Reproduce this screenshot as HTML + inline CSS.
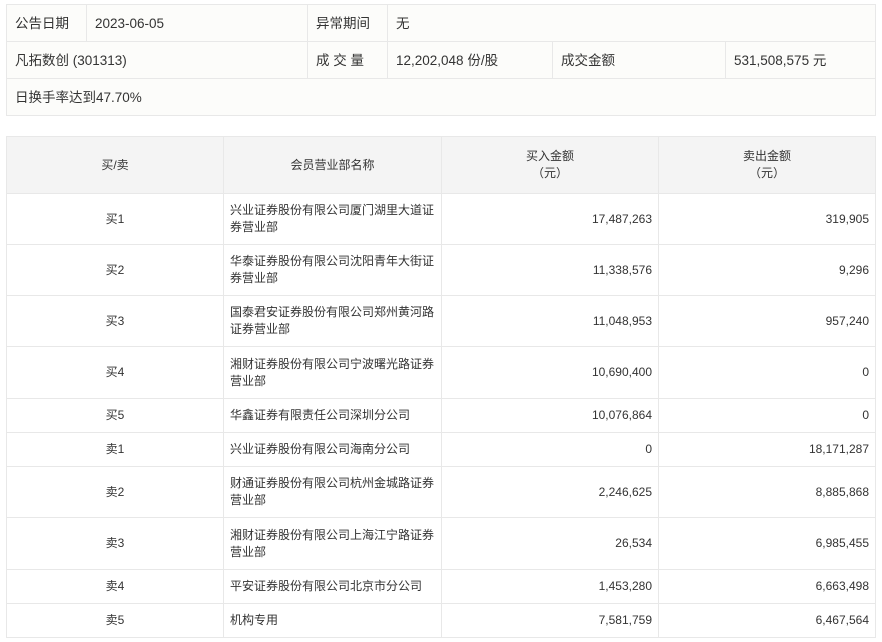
<!DOCTYPE html>
<html><head><meta charset="utf-8"><style>
body{margin:0;width:882px;height:642px;background:#fff;font-family:"Liberation Sans","Noto Sans CJK SC",sans-serif;font-size:12px;color:#333;position:relative;overflow:hidden}
table{border-collapse:collapse;position:absolute;left:6px;table-layout:fixed}
td{border:1px solid #e8e8e8;padding:0;line-height:17px}
#t1{top:4px;width:869px;background:#fcfcfa;font-size:13.5px}
#t1 td{height:36px;padding-left:8px}
#t2{top:136px;width:869px}
#t2 th{background:#f4f4f4;border:1px solid #e8e8e8;font-weight:normal;height:56px;line-height:17px;padding:0}
#t2 td.c{text-align:center}
#t2 td.r{text-align:right;padding-right:6px}
#t2 td.n{padding-left:6px}
</style></head><body>
<table id="t1">
<colgroup><col style="width:80px"><col style="width:221px"><col style="width:80px"><col style="width:165px"><col style="width:173px"><col style="width:150px"></colgroup>
<tr><td>公告日期</td><td>2023-06-05</td><td>异常期间</td><td colspan="3">无</td></tr>
<tr><td colspan="2">凡拓数创 (301313)</td><td>成 交 量</td><td>12,202,048 份/股</td><td>成交金额</td><td>531,508,575 元</td></tr>
<tr><td colspan="6">日换手率达到47.70%</td></tr>
</table>
<table id="t2">
<colgroup><col style="width:217px"><col style="width:218px"><col style="width:217px"><col style="width:217px"></colgroup>
<tr><th>买/卖</th><th>会员营业部名称</th><th>买入金额<br>（元）</th><th>卖出金额<br>（元）</th></tr>
<tr style="height:51px"><td class="c">买1</td><td class="n">兴业证券股份有限公司厦门湖里大道证<br>券营业部</td><td class="r">17,487,263</td><td class="r">319,905</td></tr>
<tr style="height:51px"><td class="c">买2</td><td class="n">华泰证券股份有限公司沈阳青年大街证<br>券营业部</td><td class="r">11,338,576</td><td class="r">9,296</td></tr>
<tr style="height:51px"><td class="c">买3</td><td class="n">国泰君安证券股份有限公司郑州黄河路<br>证券营业部</td><td class="r">11,048,953</td><td class="r">957,240</td></tr>
<tr style="height:52px"><td class="c">买4</td><td class="n">湘财证券股份有限公司宁波曙光路证券<br>营业部</td><td class="r">10,690,400</td><td class="r">0</td></tr>
<tr style="height:34px"><td class="c">买5</td><td class="n">华鑫证券有限责任公司深圳分公司</td><td class="r">10,076,864</td><td class="r">0</td></tr>
<tr style="height:34px"><td class="c">卖1</td><td class="n">兴业证券股份有限公司海南分公司</td><td class="r">0</td><td class="r">18,171,287</td></tr>
<tr style="height:51px"><td class="c">卖2</td><td class="n">财通证券股份有限公司杭州金城路证券<br>营业部</td><td class="r">2,246,625</td><td class="r">8,885,868</td></tr>
<tr style="height:52px"><td class="c">卖3</td><td class="n">湘财证券股份有限公司上海江宁路证券<br>营业部</td><td class="r">26,534</td><td class="r">6,985,455</td></tr>
<tr style="height:34px"><td class="c">卖4</td><td class="n">平安证券股份有限公司北京市分公司</td><td class="r">1,453,280</td><td class="r">6,663,498</td></tr>
<tr style="height:34px"><td class="c">卖5</td><td class="n">机构专用</td><td class="r">7,581,759</td><td class="r">6,467,564</td></tr>
</table>
</body></html>
